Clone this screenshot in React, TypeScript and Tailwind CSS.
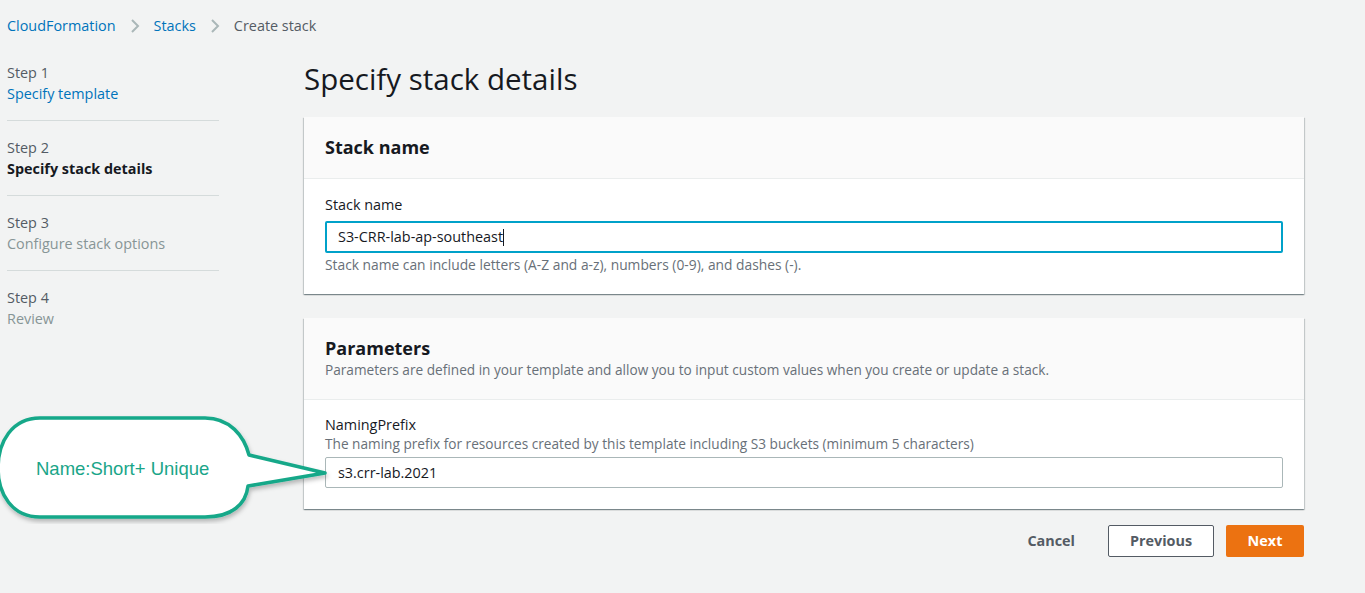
import React from "react"

const steps = [
  { n: 1, label: "Specify template", state: "done" },
  { n: 2, label: "Specify stack details", state: "current" },
  { n: 3, label: "Configure stack options", state: "todo" },
  { n: 4, label: "Review", state: "todo" },
]

function Chevron() {
  return (
    <svg width="10" height="16" viewBox="0 0 10 16" className="mx-[14px]">
      <path d="M2 2 L8 8 L2 14" fill="none" stroke="#aab7b8" strokeWidth="2" />
    </svg>
  )
}

function Callout() {
  return (
    <div className="absolute left-0 top-[414px] w-[340px] h-[110px] pointer-events-none">
      <svg width="340" height="110" viewBox="0 0 340 110" className="absolute inset-0">
        <defs>
          <filter id="sh" x="-10%" y="-10%" width="120%" height="130%">
            <feDropShadow dx="1" dy="3" stdDeviation="2" floodColor="#000" floodOpacity="0.25" />
          </filter>
        </defs>
        <path
          d="M40 4 H205 C230 4 244 22 249 41 L325 59 L248 72 C246 90 232 103 205 103 H40 C12 103 -2 80 -2 54 C-2 28 12 4 40 4 Z"
          fill="#fff"
          stroke="#16a889"
          strokeWidth="3.5"
          strokeLinejoin="round"
          filter="url(#sh)"
        />
      </svg>
      <div className="absolute left-[36px] top-[41px] text-[18.5px] text-[#1aa588] font-['Liberation_Sans',Arial,sans-serif]">
        Name:Short+ Unique
      </div>
    </div>
  )
}

const cardShadow =
  "bg-white shadow-[0_1px_1px_0_rgba(0,28,36,0.3),1px_1px_1px_0_rgba(0,28,36,0.15),-1px_1px_1px_0_rgba(0,28,36,0.15)]"

export default function App() {
  return (
    <div className="relative w-[1365px] h-[593px] bg-[#f2f3f3] font-['Open_Sans',sans-serif] text-[#16191f] overflow-hidden">
      <nav className="flex items-center h-[52px] pl-[7px] text-[14.4px]">
        <span className="text-[#0073bb]">CloudFormation</span>
        <Chevron />
        <span className="text-[#0073bb]">Stacks</span>
        <Chevron />
        <span className="text-[#545b64]">Create stack</span>
      </nav>

      <div className="flex">
        <aside className="w-[212px] ml-[7px] -mt-[6px] text-[14.4px]">
          {steps.map((s, i) => (
            <div
              key={s.n}
              className={`h-[75px] pt-[16px] ${i < steps.length - 1 ? "border-b border-[#d5dbdb]" : ""}`}
            >
              <div className="text-[#545b64] leading-[21px]">Step {s.n}</div>
              <div
                className={`leading-[21px] ${
                  s.state === "done"
                    ? "text-[#0073bb]"
                    : s.state === "current"
                    ? "font-bold text-[#16191f]"
                    : "text-[#879596]"
                }`}
              >
                {s.label}
              </div>
            </div>
          ))}
        </aside>

        <main className="ml-[85px] w-[1000px]">
          <h1 className="text-[29.5px] leading-[34px] mt-[10px] mb-[21px] text-[#16191f]">Specify stack details</h1>

          <section className={cardShadow}>
            <div className="bg-[#fafafa] border-b border-[#eaeded] h-[62px] flex items-center px-[21px]">
              <h2 className="text-[18px] font-bold">Stack name</h2>
            </div>
            <div className="px-[21px] pt-[15px] pb-[20px] text-[14.4px]">
              <div className="leading-[22px]">Stack name</div>
              <div className="mt-[5px] h-[32px] border-2 border-[#00a1c9] rounded-[2px] flex items-center">
                <span className="ml-[11px]">S3-CRR-lab-ap-southeast</span>
                <span className="inline-block w-[1px] h-[17px] bg-[#16191f]" />
              </div>
              <div className="text-[13.8px] text-[#687078] mt-[3px] leading-[18px]">
                Stack name can include letters (A-Z and a-z), numbers (0-9), and dashes (-).
              </div>
            </div>
          </section>

          <section className={`mt-[24px] ${cardShadow}`}>
            <div className="bg-[#fafafa] border-b border-[#eaeded] h-[82px] px-[21px] pt-[18px]">
              <h2 className="text-[18px] font-bold leading-[24px]">Parameters</h2>
              <div className="text-[13.65px] text-[#687078] leading-[18px] mt-[1px]">
                Parameters are defined in your template and allow you to input custom values when you create or update a stack.
              </div>
            </div>
            <div className="px-[21px] pt-[15px] pb-[21px] text-[14.4px]">
              <div className="leading-[20px]">NamingPrefix</div>
              <div className="text-[13.65px] text-[#687078] leading-[18px]">
                The naming prefix for resources created by this template including S3 buckets (minimum 5 characters)
              </div>
              <div className="mt-[4px] h-[31px] border border-[#aab7b8] rounded-[2px] flex items-center px-[12px]">
                s3.crr-lab.2021
              </div>
            </div>
          </section>

          <div className="flex justify-end items-center mt-[16px] gap-[12px] text-[14.4px] font-bold">
            <button className="h-[32px] px-[20px] text-[#545b64] mr-[1px]">Cancel</button>
            <button className="h-[32px] w-[106px] border border-[#545b64] rounded-[2px] bg-white text-[#545b64]">
              Previous
            </button>
            <button className="h-[32px] w-[78px] rounded-[2px] bg-[#ec7211] text-white">Next</button>
          </div>
        </main>
      </div>

      <Callout />
    </div>
  )
}
